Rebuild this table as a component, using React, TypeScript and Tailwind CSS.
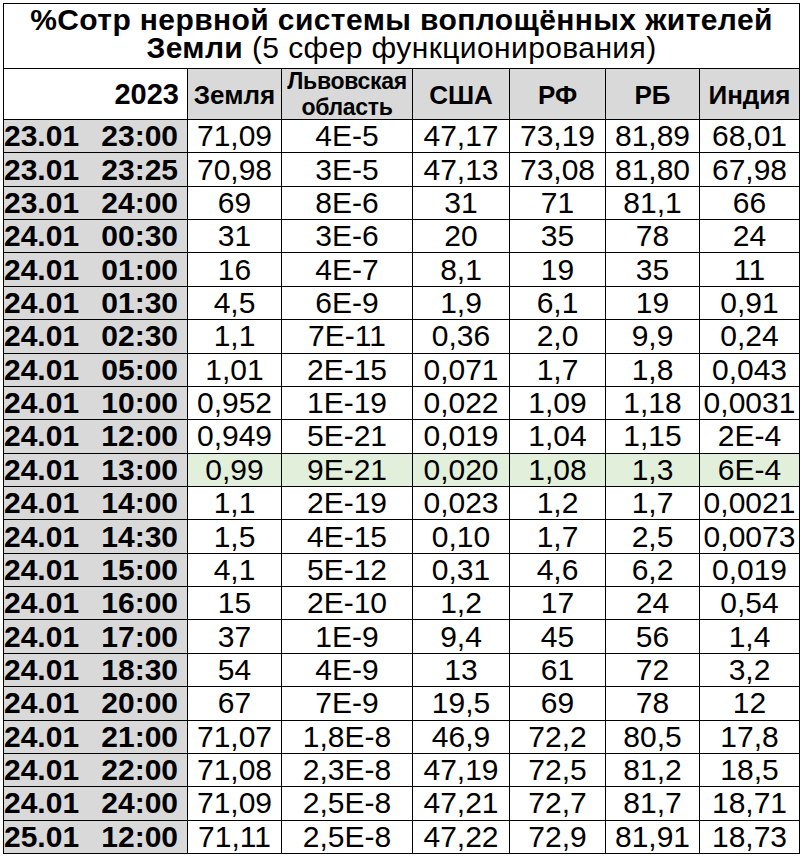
const rows: string[][] = [
  ["23.01", "23:00", "71,09", "4E-5", "47,17", "73,19", "81,89", "68,01"],
  ["23.01", "23:25", "70,98", "3E-5", "47,13", "73,08", "81,80", "67,98"],
  ["23.01", "24:00", "69", "8E-6", "31", "71", "81,1", "66"],
  ["24.01", "00:30", "31", "3E-6", "20", "35", "78", "24"],
  ["24.01", "01:00", "16", "4E-7", "8,1", "19", "35", "11"],
  ["24.01", "01:30", "4,5", "6E-9", "1,9", "6,1", "19", "0,91"],
  ["24.01", "02:30", "1,1", "7E-11", "0,36", "2,0", "9,9", "0,24"],
  ["24.01", "05:00", "1,01", "2E-15", "0,071", "1,7", "1,8", "0,043"],
  ["24.01", "10:00", "0,952", "1E-19", "0,022", "1,09", "1,18", "0,0031"],
  ["24.01", "12:00", "0,949", "5E-21", "0,019", "1,04", "1,15", "2E-4"],
  ["24.01", "13:00", "0,99", "9E-21", "0,020", "1,08", "1,3", "6E-4"],
  ["24.01", "14:00", "1,1", "2E-19", "0,023", "1,2", "1,7", "0,0021"],
  ["24.01", "14:30", "1,5", "4E-15", "0,10", "1,7", "2,5", "0,0073"],
  ["24.01", "15:00", "4,1", "5E-12", "0,31", "4,6", "6,2", "0,019"],
  ["24.01", "16:00", "15", "2E-10", "1,2", "17", "24", "0,54"],
  ["24.01", "17:00", "37", "1E-9", "9,4", "45", "56", "1,4"],
  ["24.01", "18:30", "54", "4E-9", "13", "61", "72", "3,2"],
  ["24.01", "20:00", "67", "7E-9", "19,5", "69", "78", "12"],
  ["24.01", "21:00", "71,07", "1,8E-8", "46,9", "72,2", "80,5", "17,8"],
  ["24.01", "22:00", "71,08", "2,3E-8", "47,19", "72,5", "81,2", "18,5"],
  ["24.01", "24:00", "71,09", "2,5E-8", "47,21", "72,7", "81,7", "18,71"],
  ["25.01", "12:00", "71,11", "2,5E-8", "47,22", "72,9", "81,91", "18,73"],
];

const regions = ["Земля", "", "США", "РФ", "РБ", "Индия"];

export default function App() {
  return (
    <div className="bg-white p-[3px] font-['Liberation_Sans',Arial,sans-serif] text-black">
      <div className="grid h-[851px] w-[797px] grid-cols-[183px_93px_130px_96px_95px_93px_99px] grid-rows-[64px_50px_repeat(22,minmax(0,1fr))] gap-px bg-black p-px">
        <div className="col-span-7 flex flex-col items-center justify-center overflow-hidden whitespace-nowrap bg-white pb-[4px] text-center text-[30px] leading-[28px] tracking-[0.4px]">
          <div className="font-bold">%Сотр нервной системы воплощённых жителей</div>
          <div>
            <span className="font-bold">Земли</span> (5 сфер функционирования)
          </div>
        </div>

        <div className="flex items-center justify-end bg-white pr-[8px] pt-[2px] text-[29px] font-bold">
          2023
        </div>
        {regions.map((r, i) =>
          i === 1 ? (
            <div
              key={i}
              className="flex flex-col items-center justify-center overflow-hidden bg-[#d9d9d9] text-[23px] font-bold leading-[26px] tracking-[-0.3px]"
            >
              <span>Львовская</span>
              <span>область</span>
            </div>
          ) : (
            <div
              key={i}
              className="flex items-center justify-center bg-[#d9d9d9] pt-[3px] text-[26px] font-bold"
            >
              {r}
            </div>
          )
        )}

        {rows.map((row, ri) => {
          const hl = row[1] === "13:00";
          return [
            <div
              key={`d${ri}`}
              className="flex items-center justify-between overflow-hidden bg-[#d9d9d9] pr-[9px] text-[30px] font-bold leading-none"
            >
              <span>{row[0]}</span>
              <span>{row[1]}</span>
            </div>,
            ...row.slice(2).map((v, ci) => (
              <div
                key={`c${ri}-${ci}`}
                className={
                  "flex items-center justify-center overflow-hidden whitespace-nowrap text-[30px] leading-none " +
                  (hl ? "bg-[#e2efda]" : "bg-white")
                }
              >
                {v}
              </div>
            )),
          ];
        })}
      </div>
    </div>
  );
}
